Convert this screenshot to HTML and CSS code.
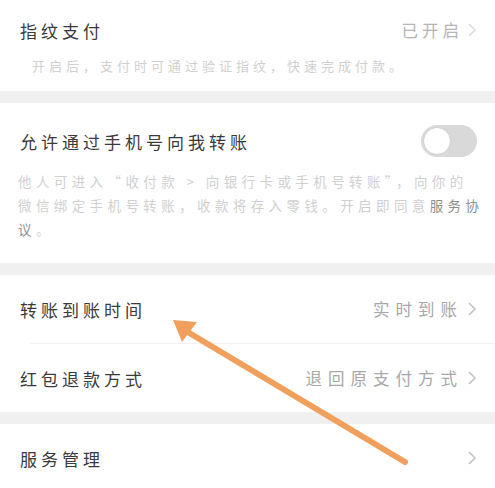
FILE: index.html
```html
<!DOCTYPE html>
<html lang="zh">
<head>
<meta charset="utf-8">
<link rel="stylesheet" href="styles.css">
</head>
<body>
<div class="page">
  <section class="card first">
    <div class="row top">
      <span class="title">指纹支付</span>
      <span class="value faint">已开启<svg class="chev" viewBox="0 0 10 16"><polyline points="2,2 8,8 2,14"/></svg></span>
    </div>
    <p class="desc indent">开启后，支付时可通过验证指纹，快速完成付款。</p>
  </section>
  <section class="card second">
    <div class="row top">
      <span class="title">允许通过手机号向我转账</span>
      <span class="toggle"><span class="knob"></span></span>
    </div>
    <p class="desc multi">他人可进入“收付款 &gt; 向银行卡或手机号转账”，向你的<br>微信绑定手机号转账，收款将存入零钱。开启即同意<span class="link">服务协</span><br><span class="link">议</span>。</p>
  </section>
  <section class="card">
    <div class="row item">
      <span class="title">转账到账时间</span>
      <span class="value">实时到账<svg class="chev" viewBox="0 0 10 16"><polyline points="2,2 8,8 2,14"/></svg></span>
    </div>
    <div class="divider"></div>
    <div class="row item">
      <span class="title">红包退款方式</span>
      <span class="value">退回原支付方式<svg class="chev" viewBox="0 0 10 16"><polyline points="2,2 8,8 2,14"/></svg></span>
    </div>
  </section>
  <section class="card">
    <div class="row item">
      <span class="title">服务管理</span>
      <span class="value"><svg class="chev" viewBox="0 0 10 16"><polyline points="2,2 8,8 2,14"/></svg></span>
    </div>
  </section>
  <svg class="arrow" viewBox="0 0 495 488" width="495" height="488">
    <line x1="405" y1="462" x2="186" y2="331"/>
    <polygon points="173,320 197,322 182,342"/>
  </svg>
</div>
</body>
</html>
```
FILE: styles.css
```css
* { box-sizing: border-box; }
html, body { margin: 0; padding: 0; }
body {
  background: #f0f0f0;
  font-family: "Noto Sans CJK SC", "Noto Sans", sans-serif;
  width: 495px;
  height: 488px;
  overflow: hidden;
}
.page {
  position: relative;
  display: flex;
  flex-direction: column;
  gap: 12px;
}
.card {
  background: #fff;
}
.first { height: 91px; padding-top: 14px; }
.second { height: 160px; padding-top: 22px; }
.row {
  display: flex;
  align-items: center;
  justify-content: space-between;
  padding: 0 18px 0 20px;
}
.top { height: 32px; }
.item { height: 68px; }
.title {
  font-size: 17px;
  letter-spacing: 4px;
  color: #3a3a3a;
}
.value {
  display: flex;
  align-items: center;
  font-size: 16.5px;
  letter-spacing: 6px;
  color: #a8a8a8;
}
.value.faint { color: #b4b4b4; letter-spacing: 4px; }
.chev {
  width: 10px;
  height: 16px;
  margin-left: 4px;
  fill: none;
  stroke: #c0c0c0;
  stroke-width: 1.5;
}
.faint .chev { stroke: #dcdcdc; }
.desc {
  margin: 0;
  font-size: 13px;
  color: #d0d0d0;
  letter-spacing: 4px;
}
.indent { padding: 10px 0 0 32px; }
.multi {
  padding: 12px 0 0 18px;
  line-height: 24px;
  letter-spacing: 4.4px;
  font-size: 13.5px;
}
.link { color: #909090; }
.toggle {
  width: 56px;
  height: 32px;
  border-radius: 16px;
  background: #d9d9d9;
  display: flex;
  align-items: center;
  padding: 2px;
}
.knob {
  width: 28px;
  height: 28px;
  border-radius: 50%;
  background: #fff;
  border: 1px solid #d0d0d0;
}
.divider {
  height: 1px;
  background: #f2f2f2;
  margin-left: 30px;
}
.arrow {
  position: absolute;
  left: 0;
  top: 0;
}
.arrow line {
  stroke: #f0a05c;
  stroke-width: 6;
  stroke-linecap: round;
}
.arrow polygon {
  fill: #f0a05c;
}
```
